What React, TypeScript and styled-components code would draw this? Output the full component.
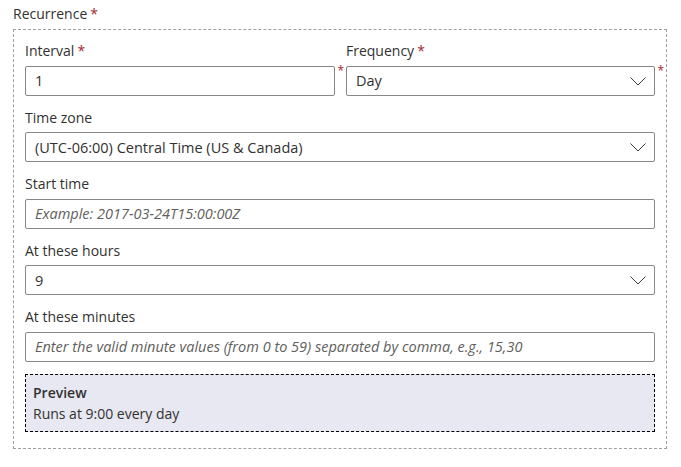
import styled, { createGlobalStyle } from "styled-components";

const GlobalStyle = createGlobalStyle`
  html, body {
    margin: 0;
    padding: 0;
    background: #ffffff;
  }
  body {
    font-family: "Segoe UI", "Open Sans", "Noto Sans", sans-serif;
    color: #323130;
  }
`;

const Page = styled.div`
  width: 681px;
  height: 467px;
  padding: 4px 14px 0 13px;
  box-sizing: border-box;
`;

const GroupLabel = styled.div`
  font-size: 14px;
  line-height: 20px;
  height: 21px;
  color: #323130;
  margin-bottom: 4px;
`;

const Star = styled.span`
  color: #a4262c;
  margin-left: 3px;
`;

const Group = styled.div`
  border: 1px dashed #a19f9d;
  padding: 11px 11px 16px 11px;
  display: flex;
  flex-direction: column;
  gap: 12px;
`;

const Row = styled.div`
  display: grid;
  grid-template-columns: 310px 309px;
  column-gap: 11px;
`;

const Field = styled.div`
  display: flex;
  flex-direction: column;
`;

const Label = styled.label`
  font-size: 14px;
  line-height: 20px;
  margin-bottom: 4.5px;
  color: #323130;
`;

const Control = styled.div`
  position: relative;
`;

const SideStar = styled.span`
  position: absolute;
  top: -2px;
  right: -9px;
  color: #a4262c;
  font-size: 12px;
  line-height: 14px;
`;

const Box = styled.div<{ $placeholder?: boolean }>`
  height: 30px;
  box-sizing: border-box;
  border: 1px solid #8a8886;
  border-radius: 2px;
  padding: 0 34px 0 9px;
  display: flex;
  align-items: center;
  font-size: 14.5px;
  font-style: ${(p) => (p.$placeholder ? "italic" : "normal")};
  color: ${(p) => (p.$placeholder ? "#605e5c" : "#323130")};
  white-space: nowrap;
  overflow: hidden;
`;

const Chevron = styled.svg`
  position: absolute;
  right: 8px;
  top: 7px;
  width: 18px;
  height: 16px;
`;

const Preview = styled.div`
  background: #e8e8f2;
  border: 1px dashed #000000;
  padding: 7px 7px 8px;
  height: 58px;
  box-sizing: border-box;
  font-size: 14px;
  line-height: 21px;
`;

const PreviewTitle = styled.div`
  font-weight: 600;
`;

function ChevronDown() {
  return (
    <Chevron viewBox="0 0 18 16">
      <polyline
        points="1.5,4.5 9,12 16.5,4.5"
        fill="none"
        stroke="#3b3a39"
        strokeWidth="1"
      />
    </Chevron>
  );
}

interface IFieldProps {
  label: string;
  value: string;
  required?: boolean;
  placeholder?: boolean;
  dropdown?: boolean;
}

function FormField({ label, value, required, placeholder, dropdown }: IFieldProps) {
  return (
    <Field>
      <Label>
        {label}
        {required && <Star>*</Star>}
      </Label>
      <Control>
        <Box $placeholder={placeholder}>{value}</Box>
        {dropdown && <ChevronDown />}
        {required && <SideStar>*</SideStar>}
      </Control>
    </Field>
  );
}

export default function App() {
  return (
    <>
      <GlobalStyle />
      <Page>
        <GroupLabel>
          Recurrence<Star>*</Star>
        </GroupLabel>
        <Group>
          <Row>
            <FormField label="Interval" value="1" required />
            <FormField label="Frequency" value="Day" required dropdown />
          </Row>
          <FormField
            label="Time zone"
            value="(UTC-06:00) Central Time (US & Canada)"
            dropdown
          />
          <FormField
            label="Start time"
            value="Example: 2017-03-24T15:00:00Z"
            placeholder
          />
          <FormField label="At these hours" value="9" dropdown />
          <FormField
            label="At these minutes"
            value="Enter the valid minute values (from 0 to 59) separated by comma, e.g., 15,30"
            placeholder
          />
          <Preview>
            <PreviewTitle>Preview</PreviewTitle>
            <div>Runs at 9:00 every day</div>
          </Preview>
        </Group>
      </Page>
    </>
  );
}
